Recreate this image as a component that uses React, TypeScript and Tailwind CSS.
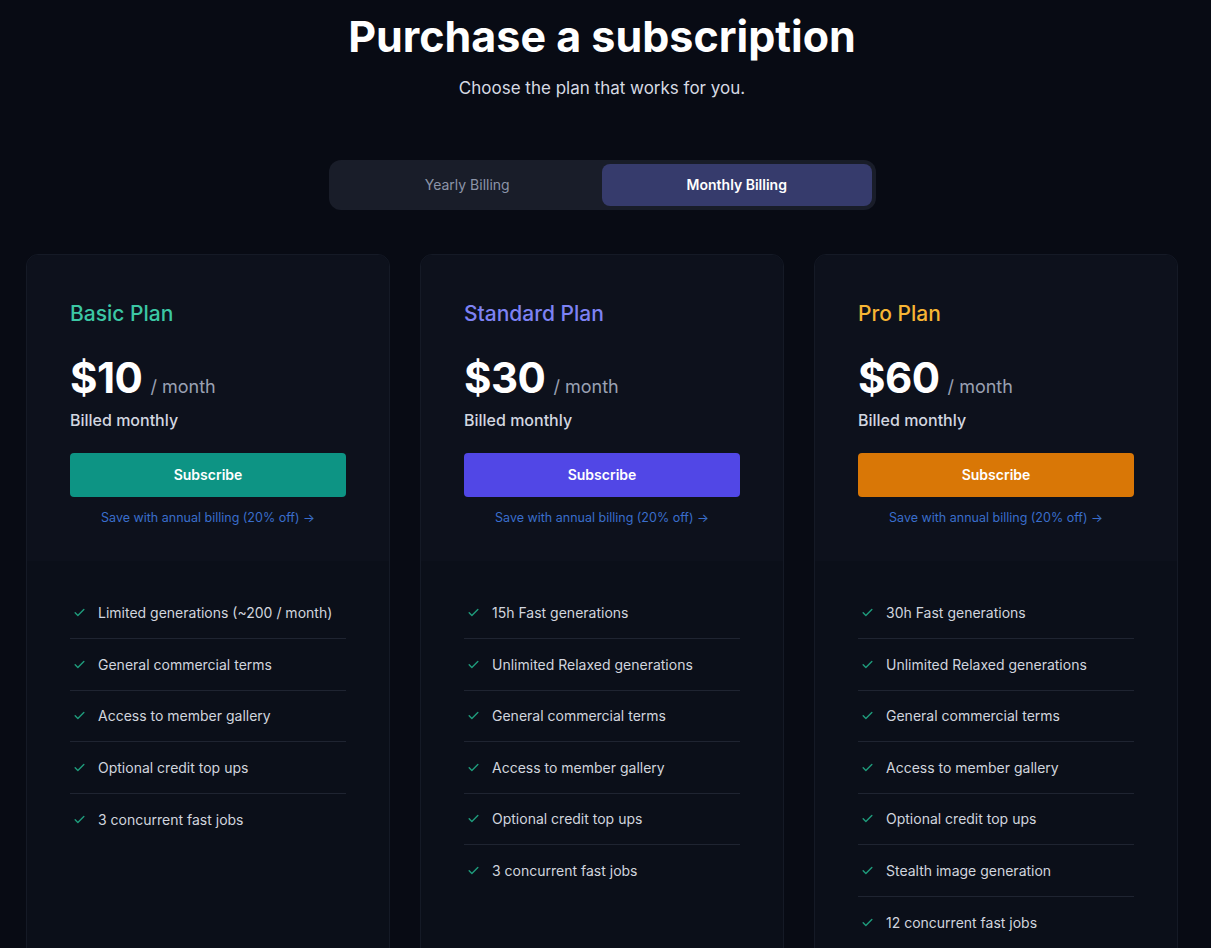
import React from "react";

type Plan = {
  name: string;
  price: string;
  nameColor: string;
  buttonColor: string;
  features: string[];
};

const plans: Plan[] = [
  {
    name: "Basic Plan",
    price: "$10",
    nameColor: "text-[#3cc7a4]",
    buttonColor: "bg-[#0d9484]",
    features: [
      "Limited generations (~200 / month)",
      "General commercial terms",
      "Access to member gallery",
      "Optional credit top ups",
      "3 concurrent fast jobs",
    ],
  },
  {
    name: "Standard Plan",
    price: "$30",
    nameColor: "text-[#7d82f3]",
    buttonColor: "bg-[#5147e6]",
    features: [
      "15h Fast generations",
      "Unlimited Relaxed generations",
      "General commercial terms",
      "Access to member gallery",
      "Optional credit top ups",
      "3 concurrent fast jobs",
    ],
  },
  {
    name: "Pro Plan",
    price: "$60",
    nameColor: "text-[#f7b534]",
    buttonColor: "bg-[#d97706]",
    features: [
      "30h Fast generations",
      "Unlimited Relaxed generations",
      "General commercial terms",
      "Access to member gallery",
      "Optional credit top ups",
      "Stealth image generation",
      "12 concurrent fast jobs",
    ],
  },
];

const Check = () => (
  <svg width="13" height="13" viewBox="0 0 24 24" fill="none" stroke="#1f9c7c" strokeWidth="2.6" strokeLinecap="round" strokeLinejoin="round" className="shrink-0">
    <path d="M4 12.5l5 5L20 6.5" />
  </svg>
);

const PlanCard = ({ plan }: { plan: Plan }) => (
  <div className="w-[364px] h-[720px] rounded-xl border border-[#151a26] bg-[#0b0f19] overflow-hidden flex flex-col">
    {/* top section */}
    <div className="bg-[#0d111c] px-[43px] pt-[45px] h-[306px]">
      <h3 className={`text-[21px] font-medium leading-[28px] ${plan.nameColor}`}>{plan.name}</h3>
      <div className="flex items-baseline mt-[24px] h-[52px]">
        <span className="text-[42px] font-bold text-white leading-[52px] tracking-[-0.5px]">{plan.price}</span>
        <span className="ml-[8px] text-[18px] text-[#9aa1b3]">/ month</span>
      </div>
      <div className="mt-[4px] text-[16px] font-medium text-[#d3d7e0] leading-[24px]">Billed monthly</div>
      <button
        type="button"
        className={`mt-[21px] w-full h-[44px] rounded-[4px] text-[14px] font-semibold text-white ${plan.buttonColor}`}
      >
        Subscribe
      </button>
      <div className="mt-[12px] text-center text-[12.5px] text-[#3a6ecb]">
        Save with annual billing (20% off) →
      </div>
    </div>
    {/* features */}
    <ul className="px-[43px] pt-[27px]">
      {plan.features.map((f, i) => (
        <li
          key={f}
          className={`flex items-center gap-[12px] h-[51.5px] pl-[3px] text-[14px] text-[#d1d5de] ${
            i < plan.features.length - 1 ? "border-b border-[#1f2431]" : ""
          }`}
        >
          <Check />
          <span>{f}</span>
        </li>
      ))}
    </ul>
  </div>
);

export default function App() {
  return (
    <div
      className="w-full h-[948px] overflow-hidden bg-[#080b14] text-white"
      style={{ fontFamily: "Inter, 'Noto Sans', sans-serif" }}
    >
      <div className="w-[1204px]">
        <div className="flex flex-col items-center pt-[10px]">
          <h1 className="text-[43px] font-bold leading-[52px] tracking-[0px] text-white">Purchase a subscription</h1>
          <p className="mt-[14px] text-[17px] text-[#d6dae3]">Choose the plan that works for you.</p>
          <div className="mt-[58px] w-[547px] h-[50px] rounded-xl bg-[#191d29] p-[4px] flex">
            <button type="button" className="flex-1 rounded-lg text-[14px] text-[#8c94a8]">
              Yearly Billing
            </button>
            <button type="button" className="flex-1 rounded-lg bg-[#363b6c] text-[14px] font-semibold text-white">
              Monthly Billing
            </button>
          </div>
        </div>
        <div className="flex gap-[30px] pl-[26px] mt-[44px]">
          {plans.map((p) => (
            <PlanCard key={p.name} plan={p} />
          ))}
        </div>
      </div>
    </div>
  );
}
